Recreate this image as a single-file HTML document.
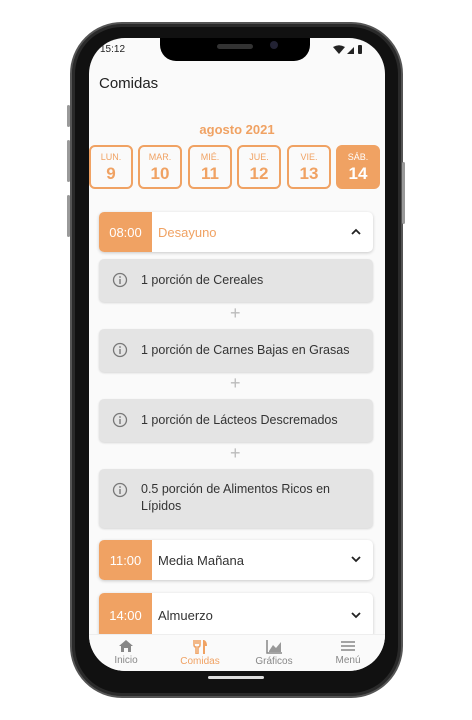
<!DOCTYPE html>
<html><head><meta charset="utf-8"><style>
*{margin:0;padding:0;box-sizing:border-box}
body{width:472px;height:720px;background:#fff;position:relative;overflow:hidden;font-family:"Liberation Sans","DejaVu Sans",sans-serif}
.phone{position:absolute;left:70px;top:22px;width:333px;height:676px;border-radius:52px;background:#111;border:2px solid #555;box-shadow:inset 0 0 0 3px #2a2a2a}
.btn{position:absolute;background:#999;border-radius:2px;width:3px}
.screen{position:absolute;left:89px;top:38px;width:296px;height:633px;border-radius:36px;background:#fafafa;overflow:hidden}
.notch{position:absolute;left:71px;top:-2px;width:150px;height:25px;background:#000;border-radius:0 0 16px 16px}
.abs{position:absolute}
.day{position:absolute;top:107px;width:44px;height:44px;border:2px solid #f0a263;border-radius:6px;text-align:center;color:#f0a263}
.day .a{font-size:9px;margin-top:5px}
.day .b{font-size:17px;font-weight:bold;margin-top:2px}
.card{position:absolute;left:10px;width:274px;background:#fff;border-radius:5px;box-shadow:0 1px 3px rgba(0,0,0,.2);overflow:hidden}
.card .t{position:absolute;left:0;top:0;bottom:0;width:53px;background:#f0a263;color:#fff;font-size:13px;display:flex;align-items:center;justify-content:center}
.card .n{position:absolute;left:59px;top:0;bottom:0;display:flex;align-items:center;font-size:13px;color:#333}
.card .c{position:absolute;right:12px;top:50%;margin-top:-4px}
.item{position:absolute;left:10px;width:274px;background:#e4e4e4;border-radius:5px;box-shadow:0 1px 2px rgba(0,0,0,.15);font-size:12.5px;color:#333}
.item svg{position:absolute;left:13px;top:13px}
.item span{position:absolute;left:42px;line-height:17px}
.plus{position:absolute;left:141px;color:#bbb;font-size:18px;font-weight:300}
.nav{position:absolute;left:0;top:596px;width:296px;height:40px;background:#fafafa;border-top:1px solid #eee}
.nav div{position:absolute;top:0;width:74px;text-align:center;font-size:10px;color:#888}
.nav svg{display:block;margin:4px auto 2px}
</style></head><body>
<div class="phone"></div>
<div class="btn" style="left:67px;top:105px;height:22px"></div>
<div class="btn" style="left:67px;top:140px;height:42px"></div>
<div class="btn" style="left:67px;top:195px;height:42px"></div>
<div class="btn" style="left:402px;top:162px;height:62px"></div>
<div class="screen">
 <div class="notch"><div class="abs" style="left:57px;top:8px;width:36px;height:5px;border-radius:3px;background:#333"></div><div class="abs" style="left:110px;top:5px;width:8px;height:8px;border-radius:50%;background:#223"></div></div>
 <div class="abs" style="left:11px;top:6px;font-size:10px;color:#222">15:12</div>
 <svg class="abs" style="left:244px;top:7px" width="32" height="10"><path d="M0 2 Q6 -1.5 12 2 L6 9Z" fill="#222"/><path d="M14 9 L21 2 L21 9Z" fill="#222"/><rect x="25" y="0" width="4" height="9" rx="1" fill="#222"/></svg>
 <div class="abs" style="left:10px;top:37px;font-size:15px;color:#222">Comidas</div>
 <div class="abs" style="left:0;width:296px;top:84px;text-align:center;font-size:13px;font-weight:bold;color:#f0a263">agosto 2021</div>
 <div class="day" style="left:0px"><div class="a">LUN.</div><div class="b">9</div></div>
 <div class="day" style="left:49px"><div class="a">MAR.</div><div class="b">10</div></div>
 <div class="day" style="left:99px"><div class="a">MIÉ.</div><div class="b">11</div></div>
 <div class="day" style="left:148px"><div class="a">JUE.</div><div class="b">12</div></div>
 <div class="day" style="left:198px"><div class="a">VIE.</div><div class="b">13</div></div>
 <div class="day" style="left:247px;background:#f0a263;color:#fff"><div class="a">SÁB.</div><div class="b">14</div></div>

 <div class="card" style="top:174px;height:40px"><div class="t">08:00</div><div class="n" style="color:#f0a263">Desayuno</div><svg class="c" width="10" height="7"><path d="M1 6 L5 2 L9 6" stroke="#222" stroke-width="1.8" fill="none"/></svg></div>
 <div class="item" style="top:221px;height:43px"><svg width="16" height="16"><circle cx="8" cy="8" r="6.5" stroke="#777" stroke-width="1.3" fill="none"/><rect x="7.3" y="7" width="1.4" height="5" fill="#777"/><circle cx="8" cy="5" r=".9" fill="#777"/></svg><span style="top:13px">1 porción de Cereales</span></div>
 <div class="plus" style="top:265px">+</div>
 <div class="item" style="top:291px;height:43px"><svg width="16" height="16"><circle cx="8" cy="8" r="6.5" stroke="#777" stroke-width="1.3" fill="none"/><rect x="7.3" y="7" width="1.4" height="5" fill="#777"/><circle cx="8" cy="5" r=".9" fill="#777"/></svg><span style="top:13px">1 porción de Carnes Bajas en Grasas</span></div>
 <div class="plus" style="top:335px">+</div>
 <div class="item" style="top:361px;height:43px"><svg width="16" height="16"><circle cx="8" cy="8" r="6.5" stroke="#777" stroke-width="1.3" fill="none"/><rect x="7.3" y="7" width="1.4" height="5" fill="#777"/><circle cx="8" cy="5" r=".9" fill="#777"/></svg><span style="top:13px">1 porción de Lácteos Descremados</span></div>
 <div class="plus" style="top:405px">+</div>
 <div class="item" style="top:431px;height:59px"><svg width="16" height="16"><circle cx="8" cy="8" r="6.5" stroke="#777" stroke-width="1.3" fill="none"/><rect x="7.3" y="7" width="1.4" height="5" fill="#777"/><circle cx="8" cy="5" r=".9" fill="#777"/></svg><span style="top:12px">0.5 porción de Alimentos Ricos en<br>Lípidos</span></div>

 <div class="card" style="top:502px;height:40px"><div class="t">11:00</div><div class="n">Media Mañana</div><svg class="c" width="10" height="7"><path d="M1 1 L5 5 L9 1" stroke="#222" stroke-width="1.8" fill="none"/></svg></div>
 <div class="card" style="top:555px;height:45px"><div class="t">14:00</div><div class="n">Almuerzo</div><svg class="c" width="10" height="7"><path d="M1 1 L5 5 L9 1" stroke="#222" stroke-width="1.8" fill="none"/></svg></div>

 <div class="nav">
  <div style="left:0"><svg width="16" height="14"><path d="M8 1 L15 7 L13 7 L13 13 L10 13 L10 9 L6 9 L6 13 L3 13 L3 7 L1 7Z" fill="#888"/></svg>Inicio</div>
  <div style="left:74px;color:#f0a263"><svg width="16" height="15"><path d="M2 1v5q0 2 2 2v7h2V8q2 0 2-2V1M4 1v4M6 1v4" stroke="#f0a263" stroke-width="1.5" fill="none"/><path d="M12 1q3 1 3 6h-2v8h-2V1z" fill="#f0a263"/></svg>Comidas</div>
  <div style="left:148px"><svg width="17" height="15"><path d="M1 1V14H16" stroke="#888" stroke-width="1.5" fill="none"/><path d="M3 12 L7 6 L10 9 L15 3 L15 13 L3 13Z" fill="#999"/></svg>Gráficos</div>
  <div style="left:222px"><svg width="16" height="14"><path d="M1 3H15M1 7H15M1 11H15" stroke="#888" stroke-width="1.5"/></svg>Menú</div>
 </div>
</div>
<div class="abs" style="left:208px;top:676px;width:56px;height:3px;border-radius:2px;background:#ddd"></div>
</body></html>
